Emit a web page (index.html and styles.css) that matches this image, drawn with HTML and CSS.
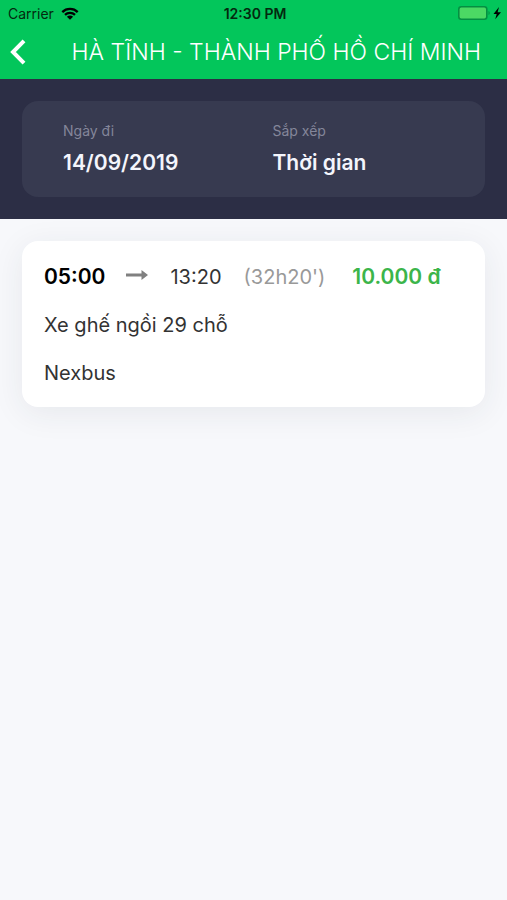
FILE: index.html
```html
<!DOCTYPE html>
<html lang="vi">
<head>
<meta charset="utf-8">
<meta name="viewport" content="width=device-width, initial-scale=1">
<title>Hà Tĩnh - Thành phố Hồ Chí Minh</title>
<link rel="stylesheet" href="styles.css">
</head>
<body>
<header class="top">
  <div class="status">
    <div class="status-left">
      <span>Carrier</span>
      <svg class="wifi" viewBox="0 0 18 13" aria-hidden="true">
        <path d="M1.3 5.1C5.6 .9 12.4 .9 16.7 5.1M4 7.9c2.8-2.7 7.2-2.7 10 0" fill="none" stroke="#000" stroke-width="2.3"/>
        <path d="M5.9 9.8c1.8-1.6 4.4-1.6 6.2 0L9 12.8z"/>
      </svg>
    </div>
    <span class="clock">12:30 PM</span>
    <div class="status-right">
      <svg class="battery" viewBox="0 0 44 15" aria-hidden="true">
        <rect x=".8" y=".8" width="28" height="12.500" rx="2.500" fill="#4cd964" stroke="#058f42" stroke-width="1.600"/>
        <path d="M30.5 5c1.600.4 1.600 3.600 0 4z" fill="#058f42"/>
        <path d="M41 1 35.500 8h3.200l-1.500 5.200L43 6.200h-3.400z"/>
      </svg>
    </div>
  </div>
  <div class="nav">
    <button class="back" type="button" aria-label="Quay lại">
      <svg viewBox="0 0 16 26" aria-hidden="true"><path d="M14 1.8 3 13l11 11.2" fill="none" stroke="#fff" stroke-width="4"/></svg>
    </button>
    <h1 class="title">HÀ TĨNH - THÀNH PHỐ HỒ CHÍ MINH</h1>
  </div>
</header>
<section class="filters">
  <dl class="filter-card">
    <div class="filter"><dt>Ngày đi</dt><dd>14/09/2019</dd></div>
    <div class="filter"><dt>Sắp xếp</dt><dd>Thời gian</dd></div>
  </dl>
</section>
<main class="trips">
  <article class="trip">
    <div class="times">
      <span class="depart">05:00</span>
      <svg class="arrow" viewBox="0 0 22 10" aria-hidden="true"><path d="M0 3.500h15.500V0L22 5l-6.500 5V6.500H0z" fill="#808080"/></svg>
      <span class="arrive">13:20</span>
      <span class="duration">(32h20')</span>
      <span class="price">10.000 đ</span>
    </div>
    <p>Xe ghế ngồi 29 chỗ</p>
    <p>Nexbus</p>
  </article>
</main>
</body>
</html>
```

FILE: styles.css
```css
* {
  box-sizing: border-box;
  margin: 0;
}

body {
  min-height: 100vh;
  background: #f7f8fb;
  color: #333;
  font-family: Inter, "Noto Sans", sans-serif;
  font-size: 20px;
  font-weight: 400;
}

.top {
  background: #03c65b;
}

.status {
  display: grid;
  grid-template-columns: 1fr auto 1fr;
  align-items: center;
  height: 28px;
  padding: 0 5px 1px 8px;
  color: #04290f;
  font-size: 14px;
}

.status-left {
  display: flex;
  align-items: center;
  gap: 7px;
}

.status-right {
  display: flex;
  justify-content: flex-end;
}

.wifi {
  width: 18px;
  height: 13px;
}

.battery {
  width: 44px;
  height: 15px;
}

.clock {
  font-weight: 600;
}

.nav {
  display: flex;
  align-items: center;
  height: 51px;
  padding: 0 26px 3px 10px;
}

.back {
  display: flex;
  padding: 0;
  border: 0;
  background: none;
}

.back svg {
  width: 16px;
  height: 26px;
}

.title {
  flex: 1;
  color: #fff;
  font-size: 23px;
  font-weight: 300;
  text-align: right;
  white-space: nowrap;
}

.filters {
  padding: 22px;
  background: #2c2e45;
}

.filter-card {
  display: grid;
  grid-template-columns: 1fr 1fr;
  padding: 20px 3px 20px 41px;
  border-radius: 16px;
  background: #373a50;
}

.filter dt {
  color: #84869a;
  font-size: 14px;
  line-height: 20px;
}

.filter dd {
  margin-top: 8px;
  color: #f4f5fc;
  font-size: 21px;
  font-weight: 600;
  line-height: 28px;
}

.trips {
  padding: 22px;
}

.trip {
  display: grid;
  gap: 20px;
  padding: 22px 22px 20px;
  border-radius: 16px;
  background: #fff;
  box-shadow: 0 6px 32px rgba(40, 50, 60, 0.08);
  line-height: 28px;
}

.times {
  display: flex;
  align-items: center;
}

.depart {
  color: #000;
  font-size: 21px;
  font-weight: 600;
}

.arrow {
  width: 22px;
  height: 10px;
  margin: 0 22px 4px 21px;
}

.duration {
  margin: 0 27px 0 22px;
  color: #999;
}

.price {
  color: #3cb54a;
  font-size: 21px;
  font-weight: 600;
}
```
